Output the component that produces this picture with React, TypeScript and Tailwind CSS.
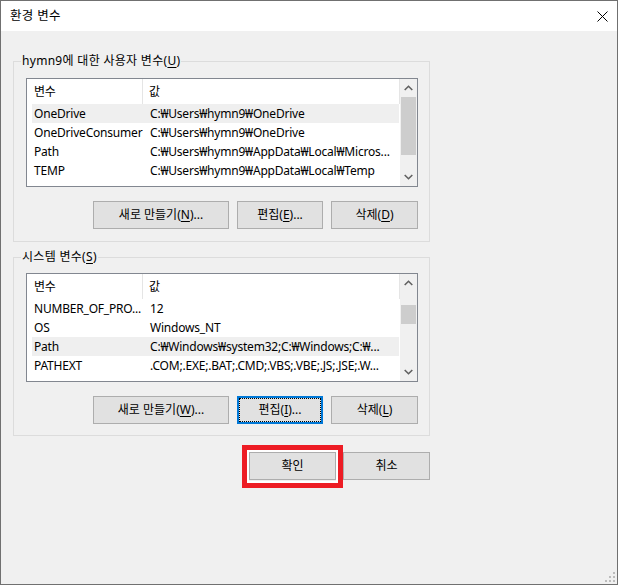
import type { ReactNode } from 'react';

interface EnvVar {
  name: string;
  value: string;
}

const userVars: EnvVar[] = [
  { name: 'OneDrive', value: 'C:₩Users₩hymn9₩OneDrive' },
  { name: 'OneDriveConsumer', value: 'C:₩Users₩hymn9₩OneDrive' },
  { name: 'Path', value: 'C:₩Users₩hymn9₩AppData₩Local₩Micros...' },
  { name: 'TEMP', value: 'C:₩Users₩hymn9₩AppData₩Local₩Temp' },
];

const systemVars: EnvVar[] = [
  { name: 'NUMBER_OF_PRO...', value: '12' },
  { name: 'OS', value: 'Windows_NT' },
  { name: 'Path', value: 'C:₩Windows₩system32;C:₩Windows;C:₩...' },
  { name: 'PATHEXT', value: '.COM;.EXE;.BAT;.CMD;.VBS;.VBE;.JS;.JSE;.W...' },
];

const font = "font-['Noto_Sans','Noto_Sans_CJK_KR',sans-serif]";

function Chevron({ down }: { down?: boolean }) {
  return (
    <svg width="9" height="6" viewBox="0 0 9 6" className={down ? 'rotate-180' : ''}>
      <path d="M0.7 5 L4.5 1.3 L8.3 5" fill="none" stroke="#606060" strokeWidth="1.6" />
    </svg>
  );
}

function VarList({ rows, selected, thumbTop, thumbHeight }: { rows: EnvVar[]; selected: number; thumbTop: number; thumbHeight: number }) {
  return (
    <div className="w-[392px] h-[109px] border border-[#828790] bg-white flex overflow-hidden">
      <div className="flex-1 overflow-hidden tracking-[-0.2px]">
        {/* header */}
        <div className="flex h-[25px] items-center">
          <div className="w-[116px] h-full pl-[7px] flex items-center border-r border-[#e5e5e5]">변수</div>
          <div className="flex-1 h-full pl-[6px] flex items-center border-r border-[#e5e5e5]">값</div>
        </div>
        {rows.map((r, i) => (
          <div
            key={r.name}
            className={`ml-[5px] w-[367px] h-[19px] flex items-center whitespace-nowrap ${i === selected ? 'bg-[#efefef]' : ''}`}
          >
            <div className="w-[111px] pl-[2px] overflow-hidden">{r.name}</div>
            <div className="flex-1 pl-[7px] overflow-hidden">{r.value}</div>
          </div>
        ))}
      </div>
      {/* scrollbar */}
      <div className="w-[17px] bg-[#f0f0f0] flex flex-col">
        <div className="h-[18px] flex items-center justify-center"><Chevron /></div>
        <div className="flex-1">
          <div className="mx-[1px] bg-[#cdcdcd]" style={{ marginTop: thumbTop, height: thumbHeight }} />
        </div>
        <div className="h-[18px] flex items-center justify-center"><Chevron down /></div>
      </div>
    </div>
  );
}

function Btn({ children, w, focused }: { children: ReactNode; w: string; focused?: boolean }) {
  return (
    <button
      className={`${w} h-[28px] bg-[#e1e1e1] flex items-center justify-center leading-none ${
        focused
          ? 'border-2 border-[#0078d7] outline-1 outline-dotted outline-black outline-offset-[-3px]'
          : 'border border-[#adadad]'
      }`}
    >
      {children}
    </button>
  );
}

function U({ children }: { children: ReactNode }) {
  return <span className="underline underline-offset-2">{children}</span>;
}

function Group({ label, children, pt, pb }: { label: ReactNode; children: ReactNode; pt: string; pb: string }) {
  return (
    <fieldset className="w-[417px] border border-[#dcdcdc]">
      <legend className="ml-[7px] px-[1px] leading-[16px] tracking-[0.3px]">{label}</legend>
      <div className={`pl-[12px] ${pt} ${pb}`}>{children}</div>
    </fieldset>
  );
}

export default function App() {
  return (
    <div className={`relative w-[618px] h-[585px] border border-[#707070] bg-[#f0f0f0] flex flex-col text-[12px] text-black ${font}`}>
      {/* title bar */}
      <div className="h-[30px] bg-white flex items-center justify-between pl-[9px] pr-[9px] shrink-0">
        <span className="text-[12.5px] tracking-[0.3px]">환경 변수</span>
        <svg width="11" height="11" viewBox="0 0 11 11">
          <path d="M0.5 0.5 L10.5 10.5 M10.5 0.5 L0.5 10.5" stroke="#000" strokeWidth="1" />
        </svg>
      </div>

      <div className="flex-1 px-[12px] pt-[22px]">
        <Group label={<>hymn9에 대한 사용자 변수(<U>U</U>)</>} pt="pt-[9px]" pb="pb-[12px]">
          <VarList rows={userVars} selected={0} thumbTop={0} thumbHeight={58} />
          <div className="w-[392px] mt-[14px] flex justify-end gap-[8px]">
            <Btn w="w-[136px]">새로 만들기(<U>N</U>)...</Btn>
            <Btn w="w-[86px]">편집(<U>E</U>)...</Btn>
            <Btn w="w-[87px]">삭제(<U>D</U>)</Btn>
          </div>
        </Group>

        <div className="mt-[7px]">
          <Group label={<>시스템 변수(<U>S</U>)</>} pt="pt-[8px]" pb="pb-[11px]">
            <VarList rows={systemVars} selected={2} thumbTop={13} thumbHeight={19} />
            <div className="w-[392px] mt-[14px] flex justify-end gap-[8px]">
              <Btn w="w-[136px]">새로 만들기(<U>W</U>)...</Btn>
              <Btn w="w-[86px]" focused>편집(<U>I</U>)...</Btn>
              <Btn w="w-[87px]">삭제(<U>L</U>)</Btn>
            </div>
          </Group>
        </div>

        <div className="w-[417px] mt-[16px] flex justify-end gap-[7px]">
          <div className="relative">
            <Btn w="w-[87px]">확인</Btn>
            {/* red annotation box */}
            <div className="absolute -left-[7px] -right-[7px] -top-[7px] -bottom-[8px] border-[5px] border-[#ed1c24] shadow-[inset_0_0_0_2px_#ffffff] pointer-events-none" />
          </div>
          <Btn w="w-[87px]">취소</Btn>
        </div>
      </div>

      {/* resize grip */}
      <svg className="absolute right-[2px] bottom-[2px]" width="10" height="10" viewBox="0 0 10 10" fill="#bcbcbc">
        <rect x="8" y="0" width="2" height="2" />
        <rect x="4" y="4" width="2" height="2" />
        <rect x="8" y="4" width="2" height="2" />
        <rect x="0" y="8" width="2" height="2" />
        <rect x="4" y="8" width="2" height="2" />
        <rect x="8" y="8" width="2" height="2" />
      </svg>
    </div>
  );
}
